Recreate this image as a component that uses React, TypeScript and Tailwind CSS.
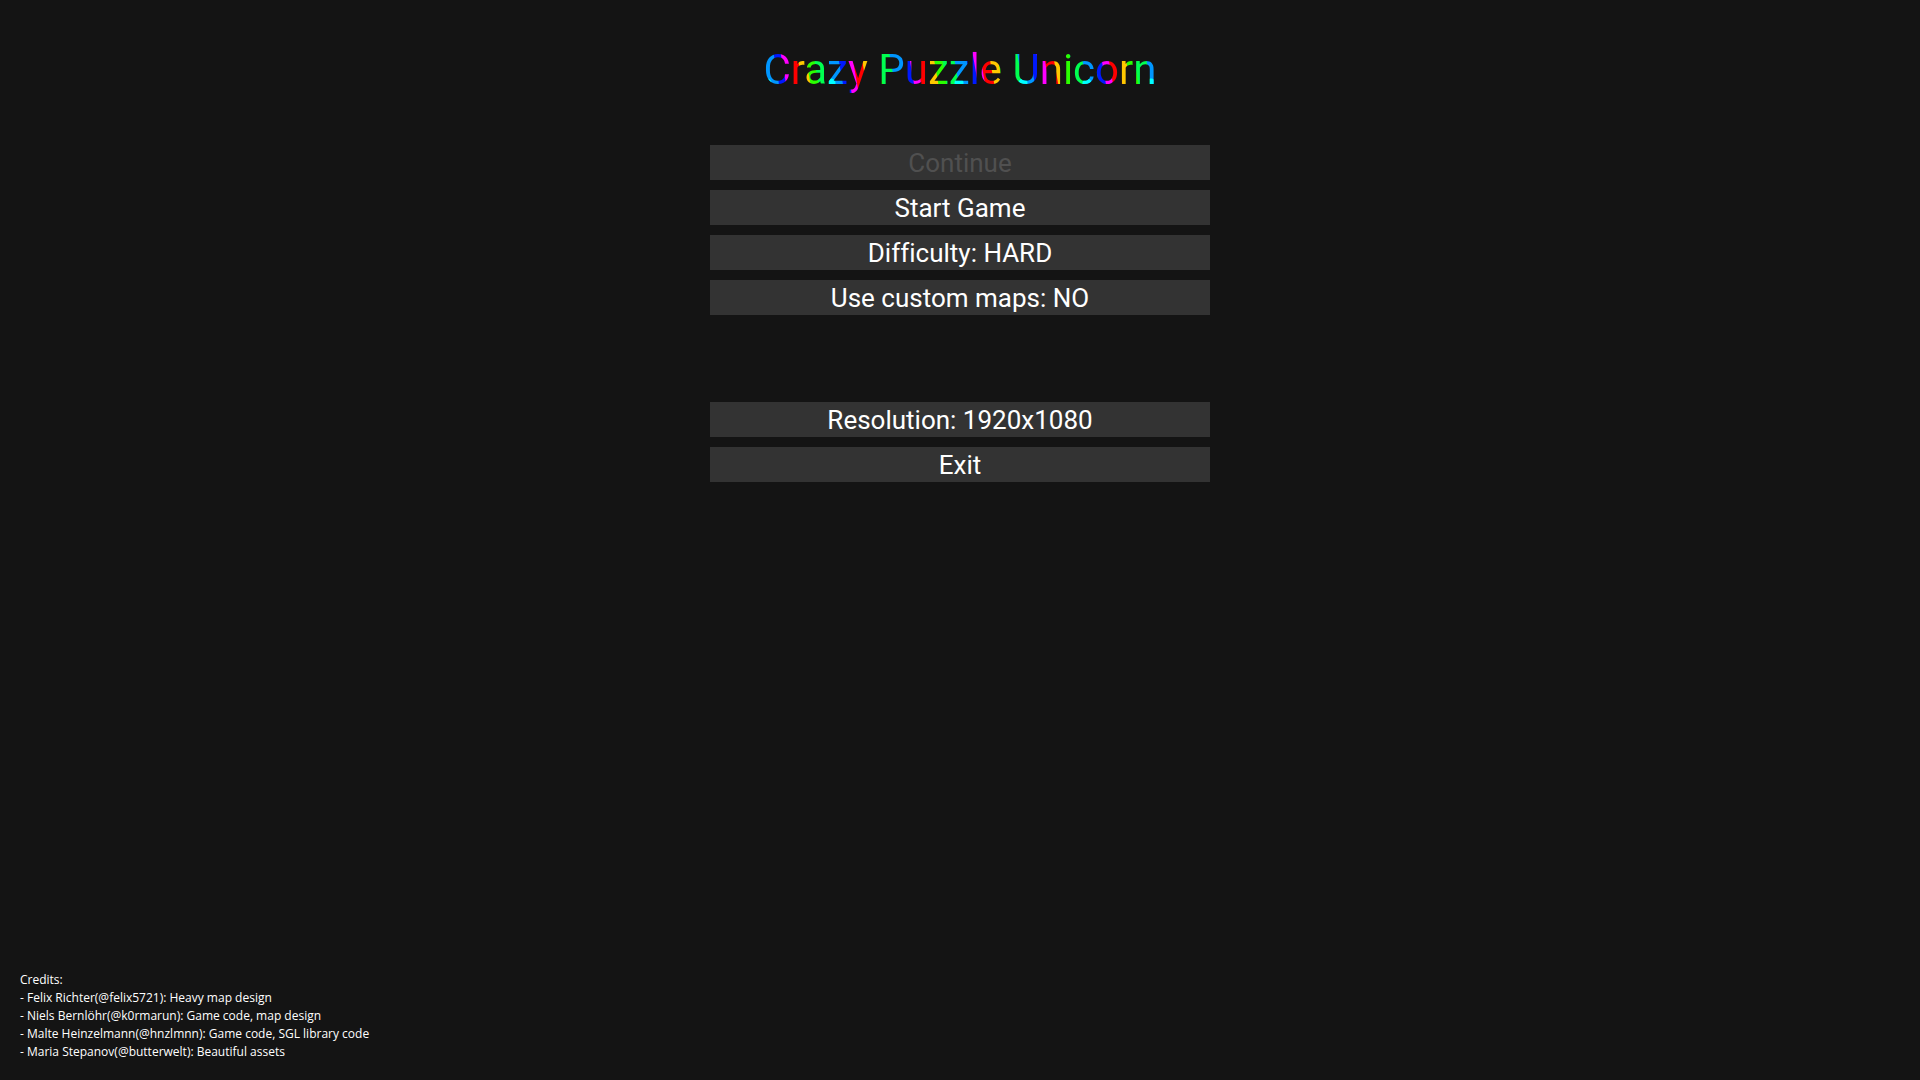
const rainbow =
  "bg-[radial-gradient(circle_at_32px_6px,#00ffff_4px,transparent_5px),repeating-linear-gradient(80deg,#00ff50_0px,#00ff50_5px,#0096ff_6px,#0096ff_17px,#0019ff_18px,#0019ff_24px,#ff00ff_25px,#ff00ff_31px,#ff0000_32px,#ff0000_40px,#ffc800_41px,#ffc800_48px,#2bff00_49px,#2bff00_56px,#00ff50_57px,#00ff50_63px)] bg-size-[64px_12px,100%_100%] bg-position-[-29px_37px,0px_0px] [background-repeat:repeat-x,no-repeat]";

const primary = ["Start Game", "Difficulty: HARD", "Use custom maps: NO"];
const secondary = ["Resolution: 1920x1080", "Exit"];
const credits = [
  "- Felix Richter(@felix5721): Heavy map design",
  "- Niels Bernlöhr(@k0rmarun): Game code, map design",
  "- Malte Heinzelmann(@hnzlmnn): Game code, SGL library code",
  "- Maria Stepanov(@butterwelt): Beautiful assets",
];

function MenuButton({ label, disabled = false }: { label: string; disabled?: boolean }) {
  return (
    <button
      type="button"
      disabled={disabled}
      className="w-full bg-[#333333] pt-px text-[26px] leading-[34px] text-white [font-variant-ligatures:none] disabled:text-[#505050]"
    >
      {label}
    </button>
  );
}

export default function App() {
  return (
    <div className="flex min-h-screen flex-col items-center bg-[#141414] font-['Roboto',sans-serif]">
      <h1 className={`mt-10 bg-clip-text text-[42px] leading-[60px] text-transparent ${rainbow}`}>
        Crazy Puzzle Unicorn
      </h1>
      <nav className="mt-[45px] flex w-full max-w-[500px] flex-col gap-[10px]">
        <MenuButton label="Continue" disabled />
        {primary.map((l) => (
          <MenuButton key={l} label={l} />
        ))}
      </nav>
      <nav className="mt-[87px] flex w-full max-w-[500px] flex-col gap-[10px]">
        {secondary.map((l) => (
          <MenuButton key={l} label={l} />
        ))}
      </nav>
      <footer className="mt-auto w-full px-5 pb-[19px] font-['Open_Sans',sans-serif] text-[12px] leading-[18px] text-white">
        <p>Credits:</p>
        <ul>
          {credits.map((c) => (
            <li key={c}>{c}</li>
          ))}
        </ul>
      </footer>
    </div>
  );
}
